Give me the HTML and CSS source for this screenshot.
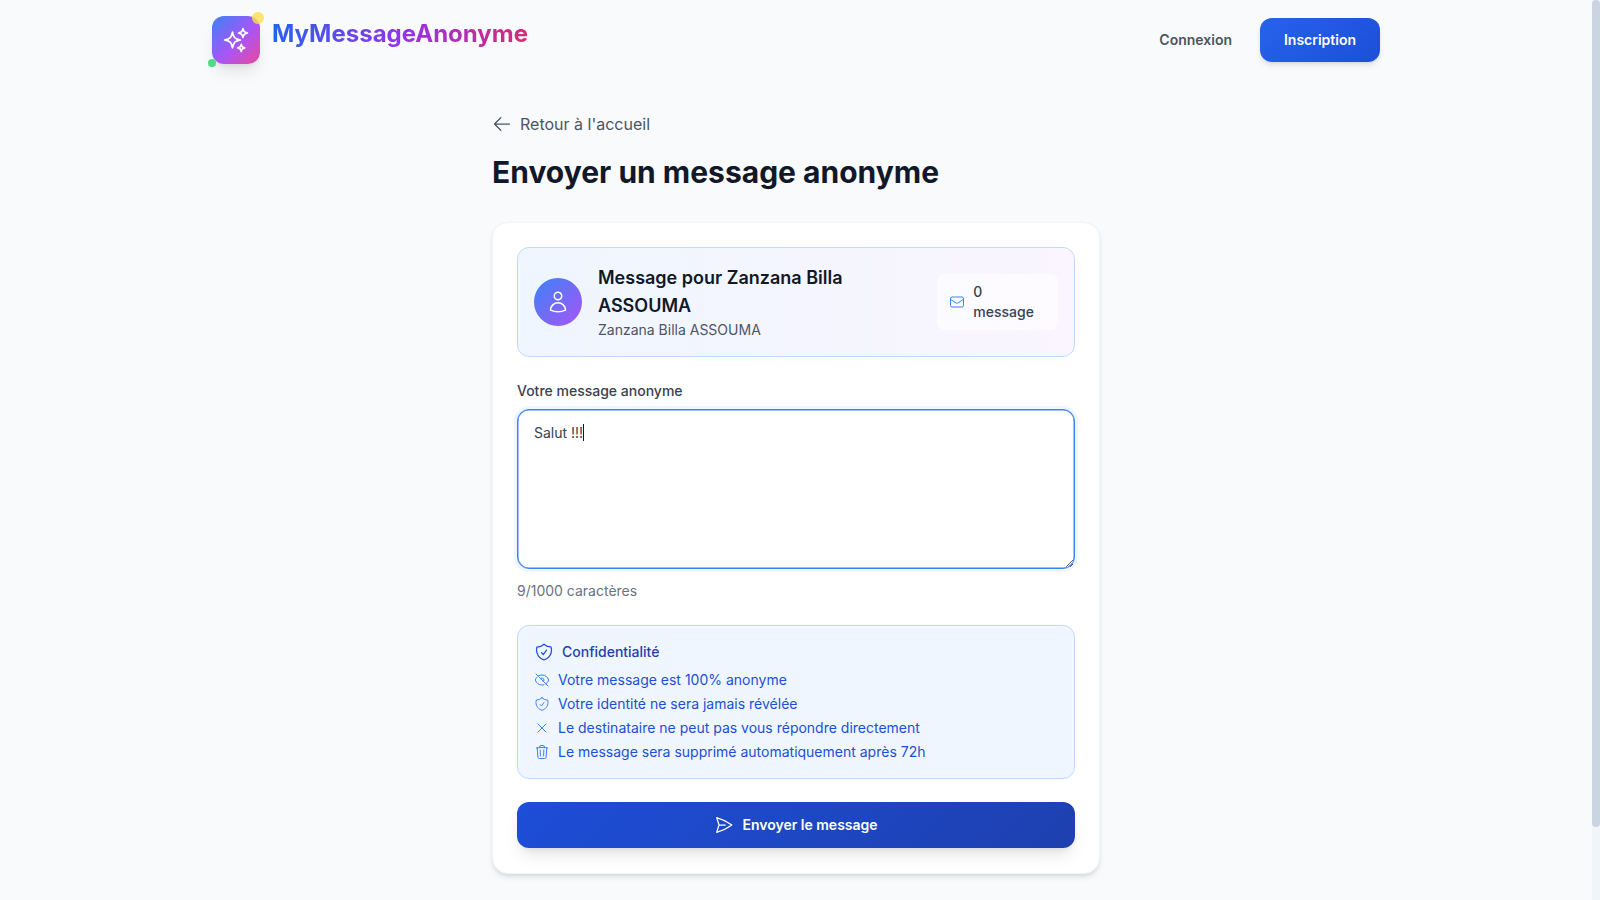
FILE: index.html
```html
<!DOCTYPE html>
<html lang="fr">
<head>
<meta charset="utf-8">
<title>MyMessageAnonyme</title>
<link rel="stylesheet" href="styles.css">
</head>
<body>
<div class="scrollbar"><span class="scrollbar-thumb"></span></div>
<header class="site-header">
  <a class="brand" href="#">
    <span class="brand-mark">
      <svg class="icon-sparkles" viewBox="0 0 24 24"><path d="M9.813 15.904 9 18.75l-.813-2.846a4.5 4.5 0 0 0-3.09-3.09L2.25 12l2.846-.813a4.5 4.5 0 0 0 3.09-3.09L9 5.25l.813 2.846a4.5 4.5 0 0 0 3.09 3.09L15.75 12l-2.846.813a4.5 4.5 0 0 0-3.09 3.09ZM18.259 8.715 18 9.75l-.259-1.035a3.375 3.375 0 0 0-2.455-2.456L14.25 6l1.036-.259a3.375 3.375 0 0 0 2.455-2.456L18 2.25l.259 1.035a3.375 3.375 0 0 0 2.456 2.456L21.75 6l-1.035.259a3.375 3.375 0 0 0-2.456 2.456ZM16.894 20.567 16.5 21.75l-.394-1.183a2.25 2.25 0 0 0-1.423-1.423L13.5 18.75l1.183-.394a2.25 2.25 0 0 0 1.423-1.423l.394-1.183.394 1.183a2.25 2.25 0 0 0 1.423 1.423l1.183.394-1.183.394a2.25 2.25 0 0 0-1.423 1.423Z"/></svg>
      <span class="dot dot-yellow"></span>
      <span class="dot dot-green"></span>
    </span>
    <span class="brand-name">MyMessageAnonyme</span>
  </a>
  <nav class="nav">
    <a class="nav-link" href="#">Connexion</a>
    <a class="nav-cta" href="#">Inscription</a>
  </nav>
</header>

<main class="page">
  <a class="back-link" href="#">
    <svg class="icon icon-20" viewBox="0 0 24 24"><path d="M10.5 19.5 3 12m0 0 7.5-7.5M3 12h18"/></svg>
    <span>Retour à l'accueil</span>
  </a>
  <h1 class="page-title">Envoyer un message anonyme</h1>

  <section class="card">
    <div class="recipient">
      <div class="recipient-main">
        <span class="avatar">
          <svg class="icon icon-24 icon-white" viewBox="0 0 24 24"><path d="M15.75 6a3.75 3.75 0 1 1-7.5 0 3.75 3.75 0 0 1 7.5 0ZM4.501 20.118a7.5 7.5 0 0 1 14.998 0A17.933 17.933 0 0 1 12 21.75c-2.676 0-5.216-.584-7.499-1.632Z"/></svg>
        </span>
        <div>
          <h2 class="recipient-title">Message pour Zanzana Billa ASSOUMA</h2>
          <p class="recipient-sub">Zanzana Billa ASSOUMA</p>
        </div>
      </div>
      <div class="badge">
        <svg class="icon icon-16 icon-blue" viewBox="0 0 24 24"><path d="M21.75 6.75v10.5a2.25 2.25 0 0 1-2.25 2.25h-15a2.25 2.25 0 0 1-2.25-2.25V6.75m19.5 0A2.25 2.25 0 0 0 19.5 4.5h-15a2.25 2.25 0 0 0-2.25 2.25m19.5 0v.243a2.25 2.25 0 0 1-1.07 1.916l-7.5 4.615a2.25 2.25 0 0 1-2.36 0L3.32 8.91a2.25 2.25 0 0 1-1.07-1.916V6.75"/></svg>
        <span class="badge-text">0 message</span>
      </div>
    </div>

    <form class="form">
      <label class="field-label" for="msg">Votre message anonyme</label>
      <div class="field-wrap">
        <textarea class="field-input" id="msg">Salut !!!</textarea>
        <span class="field-caret"></span>
      </div>
      <p class="field-count">9/1000 caractères</p>

      <div class="privacy">
        <div class="privacy-head">
          <svg class="icon icon-20" viewBox="0 0 24 24"><path d="M9 12.75 11.25 15 15 9.75m-3-7.036A11.959 11.959 0 0 1 3.598 6 11.99 11.99 0 0 0 3 9.749c0 5.592 3.824 10.29 9 11.623 5.176-1.332 9-6.03 9-11.622 0-1.31-.21-2.571-.598-3.751h-.152c-3.196 0-6.1-1.248-8.25-3.285Z"/></svg>
          <span>Confidentialité</span>
        </div>
        <ul class="privacy-list">
          <li class="privacy-item"><svg class="icon icon-16 icon-blue" viewBox="0 0 24 24"><path d="M3.98 8.223A10.477 10.477 0 0 0 1.934 12C3.226 16.338 7.244 19.5 12 19.5c.993 0 1.953-.138 2.863-.395M6.228 6.228A10.451 10.451 0 0 1 12 4.5c4.756 0 8.773 3.162 10.065 7.498a10.522 10.522 0 0 1-4.293 5.774M6.228 6.228 3 3m3.228 3.228 3.65 3.65m7.894 7.894L21 21m-3.228-3.228-3.65-3.65m0 0a3 3 0 1 0-4.243-4.243m4.242 4.242L9.88 9.88"/></svg><span>Votre message est 100% anonyme</span></li>
          <li class="privacy-item"><svg class="icon icon-16 icon-blue" viewBox="0 0 24 24"><path d="M9 12.75 11.25 15 15 9.75m-3-7.036A11.959 11.959 0 0 1 3.598 6 11.99 11.99 0 0 0 3 9.749c0 5.592 3.824 10.29 9 11.623 5.176-1.332 9-6.03 9-11.622 0-1.31-.21-2.571-.598-3.751h-.152c-3.196 0-6.1-1.248-8.25-3.285Z"/></svg><span>Votre identité ne sera jamais révélée</span></li>
          <li class="privacy-item"><svg class="icon icon-16 icon-blue" viewBox="0 0 24 24"><path d="M6 18 18 6M6 6l12 12"/></svg><span>Le destinataire ne peut pas vous répondre directement</span></li>
          <li class="privacy-item"><svg class="icon icon-16 icon-blue" viewBox="0 0 24 24"><path d="m14.74 9-.346 9m-4.788 0L9.26 9m9.968-3.21c.342.052.682.107 1.022.166m-1.022-.165L18.16 19.673a2.25 2.25 0 0 1-2.244 2.077H8.084a2.25 2.25 0 0 1-2.244-2.077L4.772 5.79m14.456 0a48.108 48.108 0 0 0-3.478-.397m-12 .562c.34-.059.68-.114 1.022-.165m0 0a48.11 48.11 0 0 1 3.478-.397m7.5 0v-.916c0-1.18-.91-2.164-2.09-2.201a51.964 51.964 0 0 0-3.32 0c-1.18.037-2.09 1.022-2.09 2.201v.916m7.5 0a48.667 48.667 0 0 0-7.5 0"/></svg><span>Le message sera supprimé automatiquement après 72h</span></li>
        </ul>
      </div>

      <button class="submit" type="button">
        <svg class="icon icon-20 icon-white" viewBox="0 0 24 24"><path d="M6 12 3.269 3.125A59.769 59.769 0 0 1 21.485 12 59.768 59.768 0 0 1 3.27 20.875L5.999 12Zm0 0h7.5"/></svg>
        <span>Envoyer le message</span>
      </button>
    </form>
  </section>
</main>
</body>
</html>
```
FILE: styles.css
```css
* { box-sizing: border-box; }
body {
  margin: 0;
  padding-right: 8px;
  background: #f9fafc;
  font-family: Inter, "Liberation Sans", sans-serif;
  font-size: 14px;
  line-height: 20px;
  color: #111827;
}
a { text-decoration: none; color: inherit; }
h1, h2, p, ul { margin: 0; padding: 0; }

.scrollbar { position: fixed; top: 0; right: 0; bottom: 0; width: 8px; background: #f1f5f9; z-index: 10; }
.scrollbar-thumb { display: block; height: 827px; border-radius: 4px; background: #cbd5e1; }

.icon { fill: none; stroke: currentColor; stroke-width: 1.5; stroke-linecap: round; stroke-linejoin: round; flex: none; display: block; }
.icon-16 { width: 16px; height: 16px; }
.icon-20 { width: 20px; height: 20px; }
.icon-24 { width: 24px; height: 24px; }
.icon-white { color: #fff; }
.icon-blue { color: #3b82f6; }

.site-header {
  max-width: 1200px;
  height: 80px;
  margin: 0 auto;
  padding: 0 16px;
  display: flex;
  align-items: center;
  justify-content: space-between;
}
.brand { display: flex; align-items: flex-start; gap: 12px; height: 48px; }
.brand-mark {
  position: relative;
  width: 48px;
  height: 48px;
  border-radius: 12px;
  background: linear-gradient(135deg, #3b82f6, #a855f7 55%, #ec4899);
  box-shadow: 0 10px 15px -3px rgba(0,0,0,.1), 0 4px 6px -4px rgba(0,0,0,.1);
  display: flex;
  align-items: center;
  justify-content: center;
}
.icon-sparkles { width: 28px; height: 28px; fill: none; stroke: #fff; stroke-width: 1.5; stroke-linecap: round; stroke-linejoin: round; }
.dot { position: absolute; border-radius: 50%; }
.dot-yellow { width: 12px; height: 12px; top: -4px; right: -4px; background: #fde047; opacity: .8; }
.dot-green { width: 8px; height: 8px; bottom: -3px; left: -4px; background: #4ade80; }
.brand-name {
  font-size: 24px;
  line-height: 36px;
  font-weight: 700;
  background: linear-gradient(90deg, #2563eb, #9333ea, #db2777);
  -webkit-background-clip: text;
  background-clip: text;
  color: transparent;
}
.nav { display: flex; align-items: center; gap: 16px; }
.nav-link { padding: 8px 12px; font-weight: 600; color: #4b5563; }
.nav-cta {
  width: 120px;
  height: 44px;
  border-radius: 12px;
  display: flex;
  align-items: center;
  justify-content: center;
  font-weight: 600;
  color: #fff;
  background: linear-gradient(135deg, #2563eb, #1d4ed8);
  box-shadow: 0 4px 6px -1px rgba(0,0,0,.1), 0 2px 4px -2px rgba(0,0,0,.1);
}

.page { max-width: 672px; margin: 0 auto; padding: 32px 32px 106px; }
.back-link { display: flex; align-items: center; gap: 8px; font-size: 16px; line-height: 24px; color: #4b5563; }
.back-link .icon { color: #4b5563; }
.page-title { margin-top: 18px; font-size: 30px; line-height: 36px; font-weight: 700; color: #111827; }

.card {
  margin-top: 32px;
  padding: 24px 24px 25px;
  background: #fff;
  border: 1px solid #f3f4f6;
  border-radius: 16px;
  box-shadow: 0 4px 6px -1px rgba(0,0,0,.1), 0 2px 4px -2px rgba(0,0,0,.1);
}
.recipient {
  display: flex;
  align-items: center;
  justify-content: space-between;
  padding: 16px;
  border: 1px solid #bfdbfe;
  border-radius: 12px;
  background: linear-gradient(90deg, #eff6ff, #faf5ff);
}
.recipient-main { display: flex; align-items: center; gap: 16px; }
.avatar {
  width: 48px;
  height: 48px;
  border-radius: 50%;
  flex: none;
  display: flex;
  align-items: center;
  justify-content: center;
  background: linear-gradient(135deg, #3b82f6, #a855f7);
}
.recipient-title { font-size: 18px; line-height: 28px; font-weight: 600; color: #111827; }
.recipient-sub { font-size: 14px; line-height: 20px; color: #4b5563; }
.badge {
  display: flex;
  align-items: center;
  gap: 8px;
  padding: 8px 12px;
  border-radius: 8px;
  background: rgba(255,255,255,.6);
}
.badge-text { font-weight: 500; color: #374151; }

.form { margin-top: 24px; display: block; }
.field-label { display: block; font-weight: 500; color: #374151; margin-bottom: 8px; }
.field-wrap { position: relative; }
.field-input {
  display: block;
  width: 100%;
  height: 160px;
  padding: 13px 16px 12px;
  border: 1px solid #3b82f6;
  border-radius: 12px;
  outline: none;
  box-shadow: 0 0 0 3px #eff6ff, inset 0 0 0 .5px #3b82f6;
  font: inherit;
  color: #374151;
  background: #fff;
  resize: vertical;
}
.field-caret { position: absolute; left: 66px; top: 15px; width: 1px; height: 17px; background: #111827; }
.field-count { margin-top: 12px; color: #6b7280; }

.privacy {
  margin-top: 24px;
  padding: 16px;
  border: 1px solid #bfdbfe;
  border-radius: 12px;
  background: #eff6ff;
}
.privacy-head { display: flex; align-items: center; gap: 8px; font-weight: 500; color: #1e40af; }
.privacy-head .icon { color: #1d4ed8; }
.privacy-list { list-style: none; margin-top: 8px; display: flex; flex-direction: column; gap: 4px; }
.privacy-item { display: flex; align-items: center; gap: 8px; color: #1d4ed8; }

.submit {
  margin-top: 23px;
  width: 100%;
  height: 46px;
  border: 0;
  border-radius: 12px;
  display: flex;
  align-items: center;
  justify-content: center;
  gap: 8px;
  font: inherit;
  font-weight: 600;
  color: #fff;
  background: linear-gradient(135deg, #1d4ed8, #1e40af);
  box-shadow: 0 10px 15px -3px rgba(0,0,0,.1), 0 4px 6px -4px rgba(0,0,0,.1);
}
```
